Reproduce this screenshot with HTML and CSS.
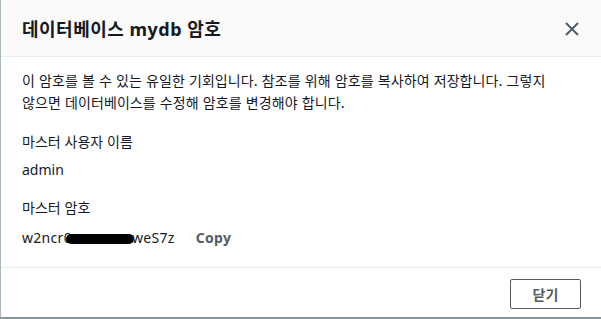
FILE: index.html
```html
<!DOCTYPE html>
<html lang="ko">
<head>
<meta charset="utf-8">
<link rel="stylesheet" href="styles.css">
</head>
<body>
<div class="modal">
  <div class="modal-header">
    <h2 class="title">데이터베이스 mydb 암호</h2>
    <button class="close" aria-label="닫기">
      <svg width="16" height="16" viewBox="0 0 16 16"><path d="M2 2 L14 14 M14 2 L2 14" stroke="#545b64" stroke-width="2" fill="none"/></svg>
    </button>
  </div>
  <div class="modal-body">
    <p class="desc">이 암호를 볼 수 있는 유일한 기회입니다. 참조를 위해 암호를 복사하여 저장합니다. 그렇지<br>않으면 데이터베이스를 수정해 암호를 변경해야 합니다.</p>
    <div class="field">
      <div class="label">마스터 사용자 이름</div>
      <div class="value">admin</div>
    </div>
    <div class="field">
      <div class="label">마스터 암호</div>
      <div class="value pw"><span class="pw-text">w2ncr0<span class="redact"></span>weS7z</span><span class="copy">Copy</span></div>
    </div>
  </div>
  <div class="modal-footer">
    <button class="btn">닫기</button>
  </div>
</div>
</body>
</html>
```

FILE: styles.css
```css
html, body {
  margin: 0;
  padding: 0;
  background: #fff;
}
body {
  font-family: "Noto Sans", "Noto Sans CJK KR", sans-serif;
  color: #16191f;
  font-size: 14px;
}
.modal {
  width: 601px;
  height: 319px;
  box-sizing: border-box;
  border-left: 1px solid #aab7b8;
  border-bottom: 2px solid #879596;
  display: flex;
  flex-direction: column;
}
.modal-header {
  height: 57px;
  box-sizing: border-box;
  background: #fafafa;
  border-bottom: 1px solid #eaeded;
  display: flex;
  align-items: center;
  justify-content: space-between;
  padding: 0 20px 0 21px;
}
.title {
  margin: 0;
  font-size: 18px;
  font-weight: 700;
  color: #16191f;
  letter-spacing: 0.5px;
}
.close {
  border: 0;
  background: none;
  padding: 0;
  width: 18px;
  height: 18px;
  display: flex;
  align-items: center;
  justify-content: center;
  margin-top: 2px;
}
.modal-body {
  flex: 1;
  padding: 12px 21px 0;
  border-bottom: 1px solid #eaeded;
}
.desc {
  margin: 0;
  line-height: 22px;
  font-family: "Noto Sans CJK KR", sans-serif;
  font-size: 14px;
  letter-spacing: 0.1px;
  font-weight: 400;
}
.field {
  margin-top: 17px;
}
.label {
  font-family: "Noto Sans CJK KR", sans-serif;
  font-size: 14px;
  line-height: 22px;
}
.value {
  margin-top: 7px;
  line-height: 22px;
  font-size: 14px;
}
.field + .field {
  margin-top: 15px;
}
.pw {
  display: flex;
  align-items: center;
  margin-top: 9px;
}
.pw-text {
  letter-spacing: 0.3px;
}
.redact {
  display: inline-block;
  width: 68px;
  height: 10px;
  background: #000;
  border-radius: 6px;
  vertical-align: middle;
  margin: 0 -2px 0 -6px;
}
.copy {
  margin-left: 21px;
  font-weight: 700;
  color: #545b64;
  letter-spacing: 0.3px;
}
.modal-footer {
  height: 49px;
  display: flex;
  align-items: center;
  justify-content: flex-end;
  padding-right: 20px;
}
.btn {
  width: 71px;
  height: 30px;
  box-sizing: border-box;
  border: 1px solid #545b64;
  border-radius: 2px;
  background: #fff;
  font-family: "Noto Sans CJK KR", sans-serif;
  font-size: 14px;
  font-weight: 700;
  color: #545b64;
  padding: 0;
  margin-top: 2px;
}
```
